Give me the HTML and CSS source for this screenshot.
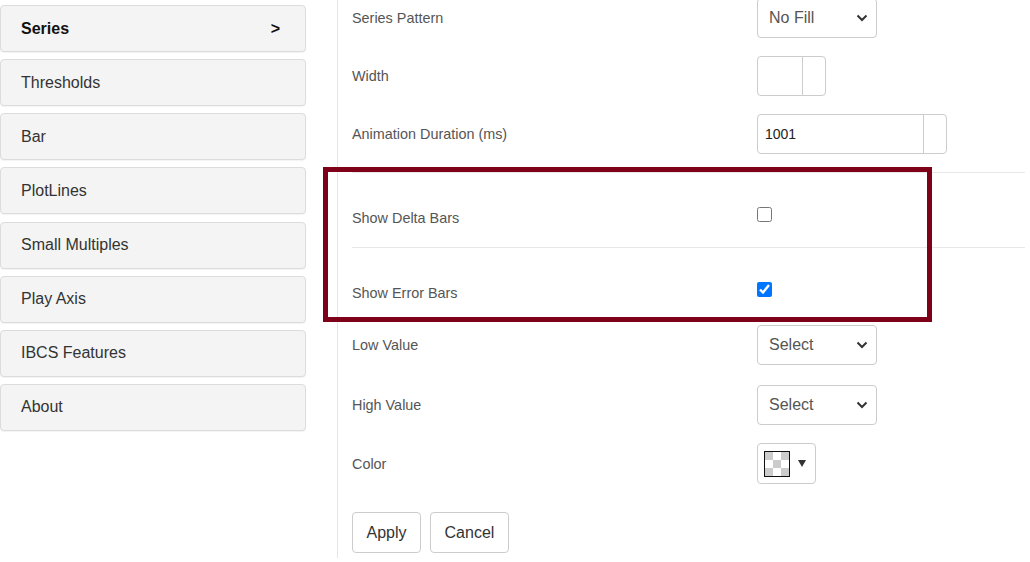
FILE: index.html
```html
<!DOCTYPE html>
<html lang="en">
<head>
<meta charset="utf-8">
<title>Series settings</title>
<link rel="stylesheet" href="styles.css">
</head>
<body>
<div class="page">
  <nav class="sidebar">
    <div class="nav-item active"><span>Series</span><span class="nav-arrow">&gt;</span></div>
    <div class="nav-item"><span>Thresholds</span></div>
    <div class="nav-item"><span>Bar</span></div>
    <div class="nav-item"><span>PlotLines</span></div>
    <div class="nav-item"><span>Small Multiples</span></div>
    <div class="nav-item"><span>Play Axis</span></div>
    <div class="nav-item"><span>IBCS Features</span></div>
    <div class="nav-item"><span>About</span></div>
  </nav>
  <main class="panel">
    <div class="form">
      <div class="row">
        <label class="label">Series Pattern</label>
        <div class="select"><span>No Fill</span><svg class="chev" width="12" height="8" viewBox="0 0 12 8"><path d="M1.5 1.5 L6 6 L10.5 1.5" fill="none" stroke="#333" stroke-width="2"/></svg></div>
      </div>
      <div class="row">
        <label class="label">Width</label>
        <div class="num num-sm"><span class="num-val"></span><span class="num-spin"></span></div>
      </div>
      <div class="row">
        <label class="label">Animation Duration (ms)</label>
        <div class="num num-lg"><span class="num-val">1001</span><span class="num-spin"></span></div>
      </div>
      <div class="check-row">
        <label class="label">Show Delta Bars</label>
        <input class="check" type="checkbox">
      </div>
      <div class="check-row">
        <label class="label">Show Error Bars</label>
        <input class="check" type="checkbox" checked>
      </div>
      <div class="row row-low">
        <label class="label">Low Value</label>
        <div class="select"><span>Select</span><svg class="chev" width="12" height="8" viewBox="0 0 12 8"><path d="M1.5 1.5 L6 6 L10.5 1.5" fill="none" stroke="#333" stroke-width="2"/></svg></div>
      </div>
      <div class="row row-high">
        <label class="label">High Value</label>
        <div class="select"><span>Select</span><svg class="chev" width="12" height="8" viewBox="0 0 12 8"><path d="M1.5 1.5 L6 6 L10.5 1.5" fill="none" stroke="#333" stroke-width="2"/></svg></div>
      </div>
      <div class="row row-color">
        <label class="label">Color</label>
        <div class="color-btn"><span class="swatch"></span><svg class="caret" width="8" height="7" viewBox="0 0 8 7"><polygon points="0,0 8,0 4,7" fill="#333"/></svg></div>
      </div>
      <div class="actions">
        <button class="btn" type="button">Apply</button>
        <button class="btn" type="button">Cancel</button>
      </div>
    </div>
  </main>
  <div class="highlight"></div>
</div>
</body>
</html>
```
FILE: styles.css
```css
html, body {
  margin: 0;
  padding: 0;
  background: #fff;
  overflow: hidden;
}

body {
  font-family: "Liberation Sans", Arial, sans-serif;
  color: #333;
}

.page {
  display: flex;
  height: 558px;
}

.sidebar {
  width: 306px;
  flex: none;
  margin-right: 31px;
  padding-top: 5px;
  box-sizing: border-box;
}

.nav-item {
  height: 47px;
  box-sizing: border-box;
  border: 1px solid #dcdcdc;
  border-radius: 4px;
  background: #f4f4f4;
  box-shadow: 0 1px 1px rgba(0, 0, 0, 0.05);
  margin-bottom: 7.15px;
  padding: 0 25px 0 20px;
  display: flex;
  align-items: center;
  justify-content: space-between;
  font-size: 16px;
  color: #333;
}

.nav-item.active {
  font-weight: bold;
  color: #111;
}

.panel {
  flex: 1;
  border-left: 1px solid #e6e6e6;
  padding: 0 5px 0 14px;
  box-sizing: border-box;
}

.form {
  margin-top: -2px;
}

.label {
  font-size: 14.4px;
  line-height: 20px;
  color: #555;
}

.row {
  display: grid;
  grid-template-columns: 405px auto;
  align-items: center;
  height: 40px;
  margin-bottom: 18px;
}

.row-low {
  margin-top: 3px;
  margin-bottom: 20px;
}

.row-color {
  height: 41px;
  margin-bottom: 28px;
}

.select {
  width: 120px;
  height: 40px;
  box-sizing: border-box;
  border: 1px solid #ccc;
  border-radius: 4px;
  padding: 0 8px 0 11px;
  display: flex;
  align-items: center;
  justify-content: space-between;
  font-size: 16px;
  color: #555;
  background: #fff;
}

.chev {
  display: block;
}

.num {
  height: 40px;
  box-sizing: border-box;
  border: 1px solid #ccc;
  border-radius: 4px;
  display: flex;
  align-items: stretch;
  background: #fff;
}

.num-sm {
  width: 69px;
}

.num-lg {
  width: 190px;
}

.num-val {
  flex: 1;
  padding-left: 7px;
  display: flex;
  align-items: center;
  font-size: 14px;
  color: #222;
}

.num-spin {
  width: 22px;
  border-left: 1px solid #ccc;
}

.check-row {
  display: grid;
  grid-template-columns: 405px auto;
  align-items: end;
  height: 75px;
  box-sizing: border-box;
  border-top: 1px solid #e8e8e8;
  padding-bottom: 19px;
}

.check {
  width: 15px;
  height: 15px;
  margin: 0 0 6px 0;
  accent-color: #0075ff;
  justify-self: start;
}

.color-btn {
  width: 59px;
  height: 41px;
  box-sizing: border-box;
  border: 1px solid #ccc;
  border-radius: 4px;
  display: flex;
  align-items: center;
  padding-left: 6px;
  background: #fff;
}

.swatch {
  width: 26px;
  height: 26px;
  box-sizing: border-box;
  border: 1px solid #111;
  background: repeating-conic-gradient(#fff 0 25%, #ccc 0 50%) 0 0 / 16px 16px;
}

.caret {
  display: block;
  margin-left: 8px;
}

.actions {
  display: flex;
  gap: 9px;
}

.btn {
  height: 41px;
  padding: 0 13.5px;
  border: 1px solid #ccc;
  border-radius: 4px;
  background: #fff;
  font-family: "Liberation Sans", Arial, sans-serif;
  font-size: 16px;
  color: #333;
}

.highlight {
  position: absolute;
  left: 323px;
  top: 167px;
  width: 609px;
  height: 155px;
  box-sizing: border-box;
  border: 5px solid #7f0019;
  pointer-events: none;
}
```
